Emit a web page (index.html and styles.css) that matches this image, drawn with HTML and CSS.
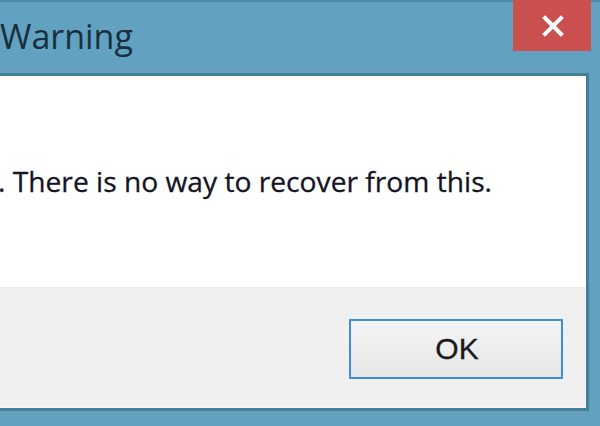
FILE: index.html
```html
<!DOCTYPE html>
<html lang="en">
  <head>
    <meta charset="UTF-8" />
    <meta name="viewport" content="width=device-width, initial-scale=1.0" />
    <title>Warning</title>
    <link rel="stylesheet" href="styles.css">
  </head>
  <body>
    <div class="window">
      <div class="titlebar">
        <div class="title">Warning</div>
        <div class="close">
          <svg width="22" height="22" viewBox="0 0 22 22">
            <path d="M3 3 L19 19 M19 3 L3 19" stroke="#fff" stroke-width="4" stroke-linecap="square" fill="none" />
          </svg>
        </div>
      </div>
      <div class="client">
        <div class="content">
          <p class="message">. There is no way to recover from this.</p>
        </div>
        <div class="footer">
          <button class="btn">OK</button>
        </div>
      </div>
    </div>
  </body>
</html>
```

FILE: styles.css
```css
body {
  margin: 0;
  background-color: #62a2c0;
}

.window {
  height: 426px;
  border-top: 2px solid #4f8ba8;
  box-sizing: border-box;
  display: flex;
  flex-direction: column;
}

.titlebar {
  height: 71px;
  display: flex;
  justify-content: space-between;
  align-items: flex-start;
}

.title {
  font-family: "Open Sans", "Noto Sans", sans-serif;
  font-size: 34px;
  color: #16303f;
  line-height: 34px;
  padding-top: 17px;
}

.close {
  width: 78px;
  height: 51px;
  margin-right: 9px;
  margin-top: -2px;
  background-color: #c9504e;
  display: flex;
  align-items: center;
  justify-content: center;
  padding-left: 2px;
  box-sizing: border-box;
}

.client {
  margin-right: 11px;
  border: 3px solid #457e97;
  border-left: 0;
  height: 338px;
  box-sizing: border-box;
  display: flex;
  flex-direction: column;
}

.content {
  background-color: #fff;
  height: 211px;
}

.message {
  margin: 87px 0 0 -2px;
  font-family: "Open Sans", "Noto Sans", sans-serif;
  font-size: 28.2px;
  line-height: 36px;
  color: #141424;
  -webkit-text-stroke: 0.3px #141424;
}

.footer {
  flex: 1;
  background-color: #f0f0f0;
  border-top: 1px solid #ebebeb;
  border-bottom: 2px solid #fbf2f2;
  display: flex;
  justify-content: flex-end;
  padding: 31px 23px 0 0;
  align-items: flex-start;
}

.btn {
  width: 214px;
  height: 60px;
  border: 2px solid #3d8de0;
  background: linear-gradient(#f4f4f4, #e6e6e6);
  font-family: "Liberation Sans", Arial, sans-serif;
  font-size: 30px;
  color: #1a1a1a;
  padding: 0 0 0 2px;
  -webkit-text-stroke: 0.3px #1a1a1a;
}
```
